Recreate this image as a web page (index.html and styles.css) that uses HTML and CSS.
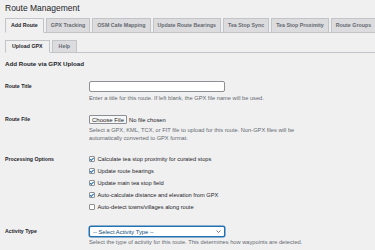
FILE: index.html
```html
<!DOCTYPE html>
<html lang="en">
<head>
  <meta charset="UTF-8" />
  <meta name="viewport" content="width=device-width, initial-scale=1.0" />
  <title>Route Management</title>
  <link rel="stylesheet" href="styles.css">
</head>
<body>
  <div class="wrap">
    <h1>Route Management</h1>

    <nav class="tabs">
      <a href="#" class="tab active">Add Route</a>
      <a href="#" class="tab">GPX Tracking</a>
      <a href="#" class="tab">OSM Cafe Mapping</a>
      <a href="#" class="tab">Update Route Bearings</a>
      <a href="#" class="tab">Tea Stop Sync</a>
      <a href="#" class="tab">Tea Stop Proximity</a>
      <a href="#" class="tab">Route Groups</a>
    </nav>

    <nav class="tabs sub">
      <a href="#" class="tab active">Upload GPX</a>
      <a href="#" class="tab">Help</a>
    </nav>

    <h2>Add Route via GPX Upload</h2>

    <form class="form">
      <div class="row row-title">
        <label class="label" for="route-title">Route Title</label>
        <div class="field">
          <input type="text" id="route-title" class="text-input" />
          <p class="desc">Enter a title for this route. If left blank, the GPX file name will be used.</p>
        </div>
      </div>

      <div class="row row-file">
        <label class="label" for="route-file">Route File</label>
        <div class="field">
          <input type="file" id="route-file" class="file-input" />
          <p class="desc">Select a GPX, KML, TCX, or FIT file to upload for this route. Non-GPX files will be<br>automatically converted to GPX format.</p>
        </div>
      </div>

      <div class="row row-options">
        <span class="label">Processing Options</span>
        <div class="field">
          <label class="option"><input type="checkbox" class="check" checked /> Calculate tea stop proximity for curated stops</label>
          <label class="option"><input type="checkbox" class="check" checked /> Update route bearings</label>
          <label class="option"><input type="checkbox" class="check" checked /> Update main tea stop field</label>
          <label class="option"><input type="checkbox" class="check" checked /> Auto-calculate distance and elevation from GPX</label>
          <label class="option"><input type="checkbox" class="check" /> Auto-detect towns/villages along route</label>
        </div>
      </div>

      <div class="row row-activity">
        <label class="label" for="activity">Activity Type</label>
        <div class="field">
          <div class="select-wrap">
            <select id="activity" class="select">
              <option>-- Select Activity Type --</option>
              <option>Cycling</option>
              <option>Walking</option>
            </select>
            <svg class="chevron" width="5" height="3" viewBox="0 0 10 6"><path d="M1 1l4 4 4-4" fill="none" stroke="#50575e" stroke-width="1.6"/></svg>
          </div>
          <p class="desc">Select the type of activity for this route. This determines how waypoints are detected.</p>
        </div>
      </div>
    </form>
  </div>
</body>
</html>
```

FILE: styles.css
```css
body { margin: 0; background: #f0f0f1; font-family: "Liberation Sans", Arial, sans-serif; color: #1d2327; overflow: hidden; }
.wrap { padding: 3px 0 0 5px; }

h1 { margin: 0; font-size: 8.5px; line-height: 11px; font-weight: normal; }

.tabs { display: flex; margin-top: 4px; border-bottom: 1px solid #c3c4c7; }
.tab { flex-shrink: 0; margin: 0 0 -1px 2px; padding: 0 4px; line-height: 13px; font-size: 5.3px; font-weight: bold; color: #646970; background: #dcdcde; border: 1px solid #c3c4c7; text-decoration: none; white-space: nowrap; }
.tab:first-child { margin-left: 0; padding: 0 5px; }
.tab.active { background: #f0f0f1; color: #1d2327; border-bottom-color: #f0f0f1; }
.tabs.sub { margin-top: 7px; }
.tabs.sub .tab { line-height: 11px; padding: 0 6px; }

h2 { margin: 6px 0 0; font-size: 6.2px; line-height: 10px; font-weight: bold; }

.row { display: grid; grid-template-columns: 84px 1fr; }
.label { font-size: 5.2px; font-weight: bold; }
.desc { margin: 2px 0 0; font-size: 5.7px; line-height: 8px; color: #646970; white-space: nowrap; }

.row-title { padding-top: 12px; }
.row-title .label { line-height: 11px; }
.text-input { display: block; box-sizing: border-box; width: 136px; height: 11px; padding: 0 3px; font-size: 5px; background: #fff; border: 1px solid #8c8f94; border-radius: 2px; }

.row-file { padding-top: 13px; }
.row-file .label { line-height: 9px; }
.file-input { display: block; height: 9px; font-size: 5.8px; font-family: inherit; color: #1d2327; }
.file-input::file-selector-button { height: 9px; margin-right: 2px; padding: 0 2px; font-size: 6px; font-family: inherit; color: #1d2327; background: #f6f7f7; border: 1px solid #8c8f94; border-radius: 1px; }

.row-options { padding-top: 11px; }
.row-options .label { line-height: 12px; }
.option { display: flex; align-items: center; gap: 2.5px; line-height: 12px; font-size: 5.7px; color: #1d2327; }
.check { appearance: none; position: relative; flex-shrink: 0; box-sizing: border-box; width: 6px; height: 6px; margin: 0; background: #fff; border: 1px solid #8c8f94; border-radius: 1px; }
.check:checked::before { content: ""; position: absolute; left: 1.2px; top: 0; width: 1.4px; height: 2.8px; border: solid #2271b1; border-width: 0 1px 1px 0; transform: rotate(45deg); }

.row-activity { padding-top: 13px; }
.row-activity .label { line-height: 11px; }
.row-activity .desc { margin-top: 1px; }
.select-wrap { position: relative; width: 136px; }
.select { appearance: none; display: block; box-sizing: border-box; width: 100%; height: 11px; padding: 0 3px; font-size: 5.8px; font-family: inherit; color: #0a4b78; background: #fff; border: 1px solid #2271b1; border-radius: 2px; box-shadow: 0 0 0 0.5px #2271b1; }
.chevron { position: absolute; right: 4px; top: 4px; }
```
